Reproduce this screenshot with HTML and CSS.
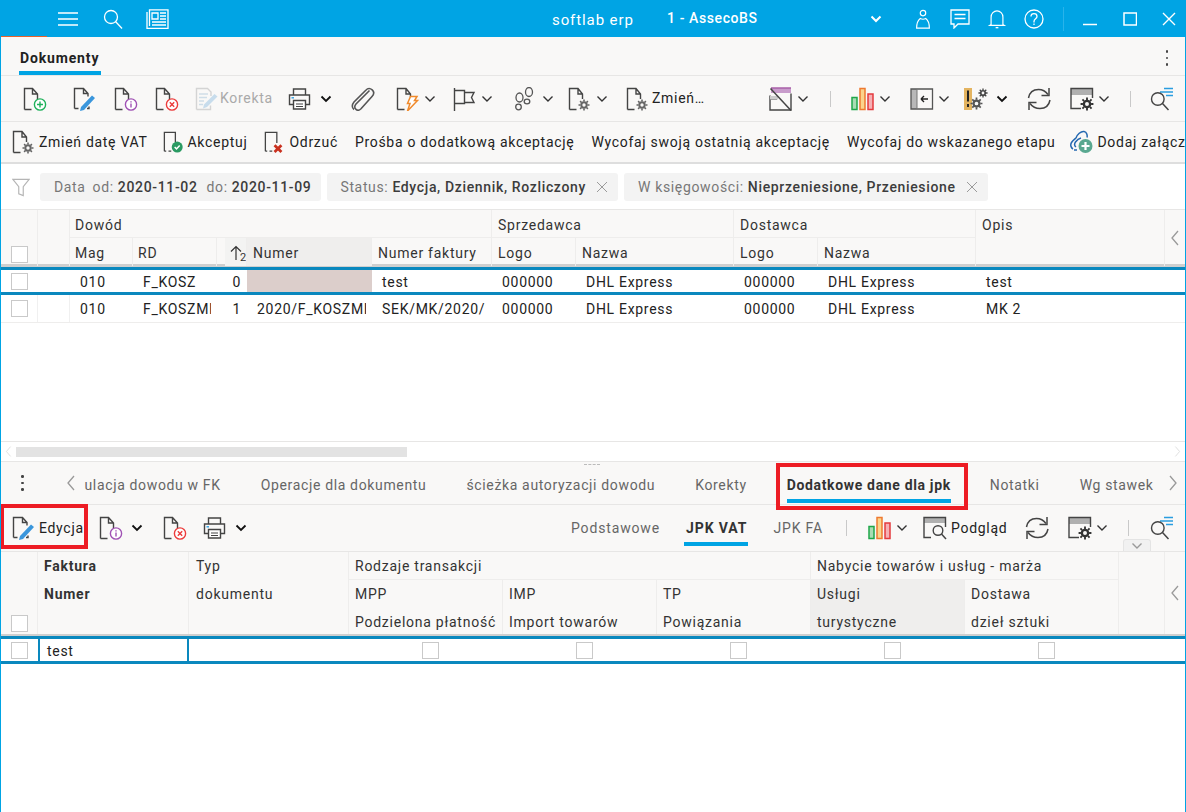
FILE: index.html
```html
<!DOCTYPE html>
<html lang="pl">
<head>
<meta charset="utf-8">
<title>softlab erp</title>
<link rel="stylesheet" href="styles.css">
</head>
<body>
<svg class="defs" xmlns="http://www.w3.org/2000/svg">
  <symbol id="doc" viewBox="0 0 24 24"><path d="M1.5 22.5V1.5h8l5 5.5v6M9.5 1.5V7h5M1.5 22.5h7" fill="none" stroke="#444" stroke-width="1.4"/></symbol>
  <symbol id="i-add" viewBox="0 0 24 24"><use href="#doc"/><circle cx="17" cy="17.5" r="5.6" fill="#fff" stroke="#1eb15a" stroke-width="1.4"/><path d="M17 14.5v6M14 17.5h6" stroke="#1eb15a" stroke-width="1.4"/></symbol>
  <symbol id="i-edit" viewBox="0 0 24 24"><path d="M1.5 21.5V1.5h9l4.500 5v3M10.500 1.500V6.500h4.500M1.500 21.500h4M14 21.500h2v-2" fill="none" stroke="#444" stroke-width="1.400"/><path d="M19 8.500l3 2.500L11 23l-4 1 1-4z" fill="#3a96dc"/></symbol>
  <symbol id="i-info" viewBox="0 0 24 24"><use href="#doc"/><circle cx="17" cy="17.500" r="5.600" fill="#fff" stroke="#a052b4" stroke-width="1.400"/><path d="M17 16.500v4M17 14.200v1.300" stroke="#a052b4" stroke-width="1.400"/></symbol>
  <symbol id="i-del" viewBox="0 0 24 24"><use href="#doc"/><circle cx="17" cy="17.500" r="5.600" fill="#fff" stroke="#ec3b3b" stroke-width="1.400"/><path d="M14.800 15.300l4.400 4.400M19.200 15.300l-4.400 4.400" stroke="#ec3b3b" stroke-width="1.400"/></symbol>
  <symbol id="i-korekta" viewBox="0 0 24 24"><path d="M1.500 22.500V1.500h11l3.500 3.500v4M1.500 22.500h14v-4" fill="none" stroke="#d4d4d4" stroke-width="1.400"/><path d="M4 7h9M4 10.500h8M4 14h5M4 17.500h4" stroke="#cfdde8" stroke-width="1.300"/><path d="M19.500 7l3 2.500L12 20l-4 1.500 1-4z" fill="#c7dcec"/></symbol>
  <symbol id="i-print" viewBox="0 0 24 24"><path d="M5.500 8V2h12v6" fill="none" stroke="#444" stroke-width="1.400"/><path d="M5 17.500H1.500V8h20v9.500H18" fill="none" stroke="#444" stroke-width="1.400"/><path d="M5.500 13.500h12V22h-12z" fill="#fff" stroke="#444" stroke-width="1.400"/><path d="M8 17h7M8 19.500h7" stroke="#444"/><path d="M3.500 10.800h2.500" stroke="#2a9de0" stroke-width="1.400"/></symbol>
  <symbol id="i-clip" viewBox="0 0 24 24"><path d="M18.500 3.500L5 17c-1.800 2-1.500 4 0 5.300 1.600 1.400 3.500 1 5-.5L21 9.500c2.300-2.500 2-5 .2-6.700C19 1 16.600 1.300 14.800 3.200L3 15c-2.500 3-2 6 0 7.500" fill="none" stroke="#555" stroke-width="1.600"/></symbol>
  <symbol id="i-flash" viewBox="0 0 24 24"><path d="M1.500 22.500V1.500h8.500l4.500 5.500v3M10 1.500V7h4.500M1.500 22.500h7" fill="none" stroke="#444" stroke-width="1.400"/><path d="M14.500 9.500H21l-2.500 4h3L11.500 24l2.500-7.500h-2.500z" fill="#fff" stroke="#f08a2c" stroke-width="1.500"/></symbol>
  <symbol id="i-flag" viewBox="0 0 24 24"><path d="M1.500 1v23M1.500 3.500h10v13h-10M11.500 5.500H21l-2.500 5 2.500 5h-9.500" fill="none" stroke="#444" stroke-width="1.400"/></symbol>
  <symbol id="i-steps" viewBox="0 0 24 24" fill="none" stroke="#555" stroke-width="1.300"><ellipse cx="5.500" cy="10.500" rx="3.500" ry="4.500"/><ellipse cx="4.500" cy="20" rx="2.800" ry="2.800"/><ellipse cx="15" cy="5" rx="3.500" ry="4.500"/><ellipse cx="13" cy="14.500" rx="2.800" ry="2.300"/></symbol>
  <symbol id="gear" viewBox="0 0 12 12"><circle cx="6" cy="6" r="2.700" fill="none" stroke="currentColor" stroke-width="2"/><path d="M6 .5v2M6 9.500v2M.5 6h2M9.500 6h2M2.100 2.100l1.400 1.400M8.500 8.500l1.400 1.400M2.100 9.900l1.400-1.400M8.500 3.500l1.400-1.400" stroke="currentColor" stroke-width="1.600"/></symbol>
  <symbol id="i-docgear" viewBox="0 0 24 24"><path d="M1.500 22.500V1.500h8.500l4.500 5.500v5M10 1.500V7h4.500M1.500 22.500h7" fill="none" stroke="#444" stroke-width="1.400"/><use href="#gear" x="10" y="12" width="12" height="12" color="#666"/></symbol>
  <symbol id="i-accept" viewBox="0 0 24 24"><path d="M1.500 22V1.500h12V12M1.500 22h2M6 22h3" fill="none" stroke="#444" stroke-width="1.400"/><circle cx="15.500" cy="17.500" r="6" fill="#2a9a62"/><path d="M12.700 17.500l2 2 3.500-3.800" fill="none" stroke="#fff" stroke-width="1.600"/></symbol>
  <symbol id="i-reject" viewBox="0 0 24 24"><path d="M1.500 22V1.500h12.500V13M1.500 22h2M6 22h3" fill="none" stroke="#444" stroke-width="1.400"/><path d="M11.500 15.500l7.500 7.500M19 15.500L11.500 23" stroke="#c9311f" stroke-width="3"/></symbol>
  <symbol id="i-cloud" viewBox="0 0 24 24"><path d="M6 8C7 4.500 11 1 14 1.500s3.500 4 3 6M3 19c-2-1-3-4-1.500-6.500S5 9 6 8M6 17c-1.500-1-2-3-.5-5S9 8.500 11 8" fill="none" stroke="#2468b0" stroke-width="1.500"/><path d="M4 20h3" stroke="#2468b0" stroke-width="1.500"/><circle cx="15.500" cy="16" r="7" fill="#5aa890"/><path d="M15.500 12v8M11.500 16h8" stroke="#fff" stroke-width="2.200"/></symbol>
  <symbol id="i-nobox" viewBox="0 0 24 24"><path d="M2 1h20v5H2z" fill="#c89ccb"/><path d="M2 1h20" stroke="#a860a8" stroke-width="1.500"/><path d="M1 8.500v14.500h21V6.500" fill="none" stroke="#444" stroke-width="1.400"/><path d="M1 12h7" stroke="#444" stroke-width="1.400"/><path d="M1 9h8v3.500H1z" fill="#ccc"/><path d="M1.500 1.500L22 23.500" stroke="#444" stroke-width="1.500"/></symbol>
  <symbol id="i-chart" viewBox="0 0 24 24"><path d="M1 10.500h5v12H1z" fill="#a9dcb4" stroke="#1fa64a" stroke-width="1.500"/><path d="M9 1.500h5v21H9z" fill="#fbd48c" stroke="#ee7a30" stroke-width="1.500"/><path d="M17 7h5v15.500h-5z" fill="#f5b0b4" stroke="#e43a3e" stroke-width="1.500"/></symbol>
  <symbol id="i-panel" viewBox="0 0 24 24"><path d="M1 2h6v20H1z" fill="#b8b8b8"/><path d="M1 2h21.500v20H1z" fill="none" stroke="#555" stroke-width="1.300"/><path d="M7 2v20" stroke="#777"/><path d="M11 12h7M11 12l3-3M11 12l3 3" stroke="#222" stroke-width="1.400" fill="none"/></symbol>
  <symbol id="i-warn" viewBox="0 0 24 24"><path d="M0 1h8v22H0z" fill="#e4b460"/><path d="M4 3.500v11M4 17v3" stroke="#222" stroke-width="2"/><use href="#gear" x="14" y="1" width="10" height="10" color="#444"/><use href="#gear" x="6" y="10" width="13" height="13" color="#555"/></symbol>
  <symbol id="i-refresh" viewBox="0 0 24 24"><path d="M1.500 11C2.500 5.500 6.500 2.500 11.500 2.500c4 0 7 1.500 9.500 5M23 13c-1 5.500-5 8.500-10 8.500-4 0-7.500-1.500-10-5" fill="none" stroke="#444" stroke-width="1.500"/><path d="M22 1v7.500h-7.500M2 23v-7.500h7.500" fill="none" stroke="#444" stroke-width="1.500"/></symbol>
  <symbol id="i-set" viewBox="0 0 24 24"><path d="M1 8V1.500h21V8z" fill="#b0b0b0"/><path d="M11 21.500H1V1.500h21.500V11" fill="none" stroke="#444" stroke-width="1.400"/><use href="#gear" x="10" y="10" width="14" height="14" color="#333"/></symbol>
  <symbol id="i-search" viewBox="0 0 24 24"><path d="M10 5h13M14 1.500h9M16 8.500h7" stroke="#2a9de0" stroke-width="1.300"/><circle cx="7.800" cy="12" r="6.300" fill="none" stroke="#444" stroke-width="1.400"/><path d="M12.500 16.500l6 6.500" stroke="#444" stroke-width="1.500"/></symbol>
  <symbol id="i-preview" viewBox="0 0 24 24"><path d="M1 7V1.500h21V7z" fill="#b0b0b0"/><path d="M8 21.500H1V1.500h21.500V11" fill="none" stroke="#444" stroke-width="1.400"/><circle cx="15" cy="14.500" r="4.800" fill="none" stroke="#444" stroke-width="1.400"/><path d="M18.500 18l4.500 5" stroke="#444" stroke-width="1.500"/></symbol>
  <symbol id="chev" viewBox="0 0 12 8"><path d="M1.500 1.500L6 6l4.500-4.500" fill="none" stroke="#333" stroke-width="1.400"/></symbol>
  <symbol id="chevb" viewBox="0 0 12 8"><path d="M1.500 1.500L6 6l4.500-4.500" fill="none" stroke="#111" stroke-width="1.800"/></symbol>
  <symbol id="left" viewBox="0 0 10 18"><path d="M8 2L2 9l6 7" fill="none" stroke="currentColor" stroke-width="1.300"/></symbol>
  <symbol id="right" viewBox="0 0 10 18"><path d="M2 2l6 7-6 7" fill="none" stroke="currentColor" stroke-width="1.300"/></symbol>
  <symbol id="x" viewBox="0 0 12 12"><path d="M1 1l10 10M11 1L1 11" stroke="#9a9a9a" stroke-width="1"/></symbol>
  <symbol id="sortup" viewBox="0 0 12 16"><path d="M6 15V1.500M1 6.500l5-5 5 5" fill="none" stroke="#333" stroke-width="1.200"/></symbol>
</svg>

<div class="app">
  <header class="top">
    <div class="top-accent"></div>
    <div class="top-left">
      <svg class="tw20" viewBox="0 0 20 14"><path d="M0 1h20M0 7h20M0 13h20" stroke="#fff" stroke-width="1.400"/></svg>
      <svg class="tw20" viewBox="0 0 20 20"><circle cx="8" cy="8" r="6.500" fill="none" stroke="#fff" stroke-width="1.300"/><path d="M12.500 12.500l6.500 7" stroke="#fff" stroke-width="1.300"/></svg>
      <svg class="tw23" viewBox="0 0 23 20"><path d="M1 3V19.500H22V.8H3.500V17" fill="none" stroke="#fff" stroke-width="1.300"/><path d="M6 4h6v6H6z" fill="none" stroke="#fff" stroke-width="1.300"/><path d="M14 4h6M14 7h6M14 10h6M6 13h14M6 16h14" stroke="#fff" stroke-width="1.300"/></svg>
    </div>
    <div class="brand">softlab erp</div>
    <div class="company">1 - AssecoBS</div>
    <svg class="top-chev" viewBox="0 0 12 8"><path d="M1.500 1.500L6 6l4.500-4.500" fill="none" stroke="#fff" stroke-width="2"/></svg>
    <div class="top-right">
      <svg class="tw20" viewBox="0 0 20 22"><circle cx="10" cy="4.500" r="3" fill="none" stroke="#fff" stroke-width="1.300"/><path d="M3 21c0-6 2-9 4-10.500 2 1 4 1 6 0 2 1.500 4 4.500 4 10.500z" fill="none" stroke="#fff" stroke-width="1.300"/></svg>
      <svg class="tw20" viewBox="0 0 20 20"><path d="M1 1h18v14H8l-4 4v-4H1z" fill="none" stroke="#fff" stroke-width="1.300"/><path d="M4.500 5.500h11M4.500 9.500h11" stroke="#fff" stroke-width="1.300"/></svg>
      <svg class="tw20" viewBox="0 0 20 22"><path d="M3.500 17V9c0-4 3-7 6.500-7s6.500 3 6.500 7v8l1.500 1H2z" fill="none" stroke="#fff" stroke-width="1.300"/><path d="M8.500 20.500h3" stroke="#fff" stroke-width="1.500"/></svg>
      <svg class="tw20" viewBox="0 0 20 20"><circle cx="10" cy="10" r="9" fill="none" stroke="#fff" stroke-width="1.300"/><path d="M7 7.500C7 5.500 8.500 4.700 10 4.700s3 1 3 2.700c0 2.300-3 2.300-3 5v1M10 14.500v1.500" fill="none" stroke="#fff" stroke-width="1.300"/></svg>
      <div class="top-sep"></div>
      <svg class="win" viewBox="0 0 14 14"><path d="M0 12.500h14" stroke="#fff" stroke-width="1.500"/></svg>
      <svg class="win" viewBox="0 0 14 14"><path d="M1 1h12.500v12H1z" fill="none" stroke="#fff" stroke-width="1.500"/></svg>
      <svg class="win" viewBox="0 0 14 14"><path d="M1 1l12 12M13 1L1 13" stroke="#fff" stroke-width="1.400"/></svg>
    </div>
  </header>

  <div class="doc-tabs">
    <div class="doc-tab">Dokumenty</div>
    <div class="kebab"><i></i><i></i><i></i></div>
  </div>

  <div class="tb tb-main">
    <div class="btn"><svg class="ic"><use href="#i-add"/></svg></div>
    <div class="btn"><svg class="ic"><use href="#i-edit"/></svg></div>
    <div class="btn"><svg class="ic"><use href="#i-info"/></svg></div>
    <div class="btn"><svg class="ic"><use href="#i-del"/></svg></div>
    <div class="btn off"><svg class="ic"><use href="#i-korekta"/></svg>Korekta</div>
    <div class="btn wide"><svg class="ic"><use href="#i-print"/></svg><svg class="ch"><use href="#chevb"/></svg></div>
    <div class="btn"><svg class="ic"><use href="#i-clip"/></svg></div>
    <div class="btn"><svg class="ic"><use href="#i-flash"/></svg><svg class="ch"><use href="#chev"/></svg></div>
    <div class="btn"><svg class="ic"><use href="#i-flag"/></svg><svg class="ch"><use href="#chev"/></svg></div>
    <div class="btn"><svg class="ic"><use href="#i-steps"/></svg><svg class="ch"><use href="#chev"/></svg></div>
    <div class="btn"><svg class="ic"><use href="#i-docgear"/></svg><svg class="ch"><use href="#chev"/></svg></div>
    <div class="btn label"><svg class="ic"><use href="#i-docgear"/></svg>Zmień…</div>
    <div class="btn"><svg class="ic"><use href="#i-nobox"/></svg><svg class="ch"><use href="#chev"/></svg></div>
    <div class="sep"></div>
    <div class="btn"><svg class="ic"><use href="#i-chart"/></svg><svg class="ch"><use href="#chev"/></svg></div>
    <div class="btn"><svg class="ic"><use href="#i-panel"/></svg><svg class="ch"><use href="#chev"/></svg></div>
    <div class="btn wide"><svg class="ic"><use href="#i-warn"/></svg><svg class="ch"><use href="#chevb"/></svg></div>
    <div class="btn"><svg class="ic"><use href="#i-refresh"/></svg></div>
    <div class="btn"><svg class="ic"><use href="#i-set"/></svg><svg class="ch"><use href="#chev"/></svg></div>
    <div class="sep"></div>
    <div class="btn"><svg class="ic"><use href="#i-search"/></svg></div>
  </div>

  <div class="tb tb-actions">
    <div class="act"><svg class="ic"><use href="#i-docgear"/></svg>Zmień datę VAT</div>
    <div class="act"><svg class="ic ic-narrow"><use href="#i-accept"/></svg>Akceptuj</div>
    <div class="act"><svg class="ic ic-narrow"><use href="#i-reject"/></svg>Odrzuć</div>
    <div class="act">Prośba o dodatkową akceptację</div>
    <div class="act">Wycofaj swoją ostatnią akceptację</div>
    <div class="act">Wycofaj do wskazanego etapu</div>
    <div class="act act-last"><svg class="ic"><use href="#i-cloud"/></svg>Dodaj załącz</div>
  </div>

  <div class="filters">
    <svg class="funnel" viewBox="0 0 20 20"><path d="M1 1h18l-6.500 8v10l-5-2V9z" fill="none" stroke="#b5b5b5" stroke-width="1.300"/></svg>
    <div class="chip chip-date"><span class="lbl">Data</span><span class="lbl mlsm">od:</span><b>2020-11-02</b><span class="lbl mlmd">do:</span><b>2020-11-09</b></div>
    <div class="chip chip-status"><span class="lbl">Status:</span><b>Edycja, Dziennik, Rozliczony</b><svg class="x"><use href="#x"/></svg></div>
    <div class="chip"><span class="lbl">W księgowości:</span><b>Nieprzeniesione, Przeniesione</b><svg class="x"><use href="#x"/></svg></div>
  </div>

  <section class="grid-pane upper">
    <div class="head t1 t1-head">
      <div class="hc r2 box-c"><span class="cb"></span></div>
      <div class="hc r2"></div>
      <div class="hc s6 line p5">Dowód</div>
      <div class="hc s2 line">Sprzedawca</div>
      <div class="hc s2 line">Dostawca</div>
      <div class="hc r2">Opis</div>
      <div class="hc r2 arrow"><svg class="arr"><use href="#left"/></svg></div>
      <div class="hc p5">Mag</div>
      <div class="hc p5">RD</div>
      <div class="hc"></div>
      <div class="hc sort"><svg class="sort-ic"><use href="#sortup"/></svg><span>2</span></div>
      <div class="hc shade">Numer</div>
      <div class="hc">Numer faktury</div>
      <div class="hc">Logo</div>
      <div class="hc">Nazwa</div>
      <div class="hc">Logo</div>
      <div class="hc">Nazwa</div>
    </div>
    <div class="row t1 sel">
      <div class="c box-c"><span class="cb"></span></div><div class="c"></div>
      <div class="c">010</div><div class="c">F_KOSZ</div><div class="c s2 num">0</div>
      <div class="c pink"></div><div class="c">test</div><div class="c">000000</div><div class="c">DHL Express</div>
      <div class="c">000000</div><div class="c">DHL Express</div><div class="c">test</div>
    </div>
    <div class="row t1 plain">
      <div class="c box-c ruled"><span class="cb"></span></div><div class="c ruled"></div>
      <div class="c">010</div><div class="c"><span class="clip">F_KOSZMI</span></div><div class="c s2 num">1</div>
      <div class="c"><span class="clip">2020/F_KOSZMI</span></div><div class="c"><span class="clip">SEK/MK/2020/1</span></div><div class="c">000000</div><div class="c">DHL Express</div>
      <div class="c">000000</div><div class="c">DHL Express</div><div class="c">MK 2</div>
    </div>
  </section>

  <div class="hscroll">
    <svg class="sc-arr"><use href="#left"/></svg>
    <div class="track"><div class="thumb"></div></div>
    <svg class="sc-arr"><use href="#right"/></svg>
  </div>

  <nav class="sub-tabs">
    <div class="kebab small"><i></i><i></i><i></i></div>
    <svg class="tab-arr"><use href="#left"/></svg>
    <div class="tabs-list">
      <span>ulacja dowodu w FK</span>
      <span>Operacje dla dokumentu</span>
      <span>ścieżka autoryzacji dowodu</span>
      <span>Korekty</span>
      <span class="on">Dodatkowe dane dla jpk</span>
      <span>Notatki</span>
      <span>Wg stawek</span>
    </div>
    <svg class="tab-arr"><use href="#right"/></svg>
    <div class="grip"></div>
  </nav>

  <div class="tb tb-lower">
    <div class="act"><svg class="ic"><use href="#i-edit"/></svg>Edycja</div>
    <div class="btn"><svg class="ic"><use href="#i-info"/></svg><svg class="ch chx"><use href="#chevb"/></svg></div>
    <div class="btn"><svg class="ic"><use href="#i-del"/></svg></div>
    <div class="btn"><svg class="ic"><use href="#i-print"/></svg><svg class="ch chx"><use href="#chevb"/></svg></div>
    <div class="views">
      <span>Podstawowe</span><span class="on">JPK VAT</span><span>JPK FA</span>
    </div>
    <div class="sep"></div>
    <div class="btn"><svg class="ic"><use href="#i-chart"/></svg><svg class="ch"><use href="#chev"/></svg></div>
    <div class="act"><svg class="ic"><use href="#i-preview"/></svg>Podgląd</div>
    <div class="btn"><svg class="ic"><use href="#i-refresh"/></svg></div>
    <div class="btn"><svg class="ic"><use href="#i-set"/></svg><svg class="ch"><use href="#chev"/></svg></div>
    <div class="sep"></div>
    <div class="btn"><svg class="ic"><use href="#i-search"/></svg></div>
    <div class="collapse"><svg class="ch"><use href="#chev"/></svg></div>
  </div>

  <section class="grid-pane lower">
    <div class="head t2 t2-head">
      <div class="hc r3 box-end"><span class="cb"></span></div>
      <div class="hc strong">Faktura</div>
      <div class="hc p7">Typ</div>
      <div class="hc s3 line">Rodzaje transakcji</div>
      <div class="hc s2 line">Nabycie towarów i usług - marża</div>
      <div class="hc r3"></div>
      <div class="hc r3 arrow"><svg class="arr"><use href="#left"/></svg></div>
      <div class="hc strong r2">Numer</div>
      <div class="hc r2 p7">dokumentu</div>
      <div class="hc">MPP</div><div class="hc">IMP</div><div class="hc">TP</div>
      <div class="hc shade">Usługi</div><div class="hc">Dostawa</div>
      <div class="hc">Podzielona płatność</div><div class="hc">Import towarów</div><div class="hc">Powiązania</div>
      <div class="hc shade">turystyczne</div><div class="hc">dzieł sztuki</div>
    </div>
    <div class="row t2 sel">
      <div class="c box-c"><span class="cb"></span></div>
      <div class="c focus">test</div>
      <div class="c"></div>
      <div class="c mid"><span class="cb"></span></div>
      <div class="c mid"><span class="cb"></span></div>
      <div class="c mid"><span class="cb"></span></div>
      <div class="c mid"><span class="cb"></span></div>
      <div class="c mid"><span class="cb"></span></div>
    </div>
  </section>

  <div class="mark mark-edit"></div>
  <div class="mark mark-tab"></div>
</div>
</body>
</html>
```

FILE: styles.css
```css
* { box-sizing: border-box; }
html, body { margin: 0; height: 100%; }
body { font: 14px/1.2 Roboto, "Liberation Sans", sans-serif; color: #222; background: #fff; overflow: hidden; }
.defs { display: none; }

.app { position: relative; width: 1186px; height: 812px; display: flex; flex-direction: column; border-left: 1px solid #00a4e4; border-right: 1px solid #00a4e4; overflow: hidden; }

/* title bar */
.top { position: relative; flex: 0 0 37px; margin: 0 -1px; display: flex; align-items: center; background: #00a4e4; color: #fff; }
.top-accent { position: absolute; left: 1px; bottom: 0; width: 46px; height: 1px; background: #e8622c; }
.top-left { display: flex; align-items: center; gap: 25px; margin-left: 58px; width: 494px; }
.tw20 { width: 20px; height: 20px; flex: none; }
.tw23 { width: 23px; height: 20px; flex: none; margin-left: -2px; }
.brand { width: 115px; font-size: 15px; letter-spacing: .9px; padding-top: 3px; }
.company { width: 203px; font-size: 14px; letter-spacing: .6px; font-weight: 500; }
.top-chev { width: 12px; height: 8px; }
.top-right { display: flex; align-items: center; gap: 17px; margin-left: 31px; }
.top-sep { width: 1px; height: 24px; background: #29b3ea; margin-left: 2px; }
.win { width: 14px; height: 14px; margin-left: 2px; }
.win + .win { margin-left: 9px; }
.win:last-child { margin-left: 8px; }

/* document tab row */
.doc-tabs { flex: 0 0 39px; display: flex; justify-content: space-between; background: #f9f8f7; border-bottom: 1px solid #e7e6e5; }
.doc-tab { margin-left: 18px; padding: 13px 1px 0; width: 82px; height: 38px; border-bottom: 4px solid #00a4e4; font-weight: 700; letter-spacing: .85px; white-space: nowrap; }
.kebab { display: flex; flex-direction: column; gap: 4px; margin: 13px 17px 0 0; }
.kebab i { width: 2.500px; height: 2.500px; border-radius: 50%; background: #444; }
.kebab.small { margin: 0 0 0 20px; }

/* toolbars */
.tb { display: flex; align-items: center; background: #f9f8f7; letter-spacing: .7px; white-space: nowrap; }
.ic { width: 24px; height: 24px; flex: none; }
.ic-narrow { width: 22px; }
.ch { width: 12px; height: 8px; flex: none; margin-left: 4px; }
.chx { margin-left: 8px; }
.btn { display: flex; align-items: center; gap: 0; }
.btn.off { color: #aaa; gap: 1px; }
.btn.label { gap: 2px; }
.btn.wide .ch { margin-left: 8px; }
.sep { width: 1px; height: 16px; background: #c9c9c9; flex: none; }

.tb-main { flex: 0 0 46px; border-bottom: 1px solid #e7e6e5; display: grid; align-items: center; padding-left: 22px;
  grid-template-columns: 50px 41px 41px 40px 93px 63px 45px 57px 61px 54px 58px 143px 61px 21px 59px 54px 63px 43px 60px 20px 30px; }

.tb-actions { flex: 0 0 42px; gap: 17px; padding-left: 11px; border-bottom: 2px solid #dedede; overflow: hidden; }
.act { display: flex; align-items: center; gap: 3px; }
.tb-actions .act:first-child { margin-right: -2px; }
.tb-actions .act-last { margin-left: -2px; }

/* filter chips */
.filters { flex: 0 0 46px; display: flex; align-items: center; gap: 6px; padding: 1px 0 0 11px; background: #fff; border-bottom: 1px solid #e7e6e5; letter-spacing: .65px; }
.funnel { width: 18px; height: 19px; margin-right: 4px; }
.chip { display: flex; align-items: center; height: 28px; padding: 0 14px; gap: 4px; background: #f3f3f3; border-radius: 3px; white-space: pre; color: #444; }
.chip-date { padding-right: 10px; }
.chip-status { padding-left: 13px; }
.chip .lbl { color: #777; }
.chip b { font-weight: 500; color: #3c3c3c; }
.mlsm { margin-left: 3px; }
.mlmd { margin-left: 5px; }
.x { width: 12px; height: 12px; margin-left: 6px; margin-right: -4px; }

/* grids */
.t1 { display: grid; grid-template-columns: 37px 32px 63px 84px 8px 22px 125px 120px 84px 158px 84px 158px 189px 20px; }
.t2 { display: grid; grid-template-columns: 37px 151px 160px 154px 154px 154px 154px 154px 46px 20px; }
.upper { flex: 0 0 231px; background: #fff; }
.lower { flex: 1; background: #fff; }
.head { background: #f9f8f7; letter-spacing: .75px; color: #333; }
.t1-head { grid-template-rows: 28px 28px; border-bottom: 3px solid #cfcfcf; height: 57px; }
.t2-head { grid-template-rows: 28px 28px 26px; height: 84px; border-bottom: 2px solid #cfcfcf; }
.hc { padding: 6px 5px 0 6px; border-right: 1px solid #eeedec; overflow: hidden; white-space: nowrap; font-size: 14px; }
.t1-head .hc { padding-top: 7px; }
.t1-head .p5 { padding-left: 5px; }
.t2-head .p7 { padding-left: 7px; }
.line { border-bottom: 1px solid #eeedec; }
.r2 { grid-row: span 2; }
.r3 { grid-row: span 3; }
.s2 { grid-column: span 2; }
.s3 { grid-column: span 3; }
.s6 { grid-column: span 6; }
.t1-head .box-c { display: flex; align-items: flex-end; justify-content: center; padding: 0 0 3px; }
.t2-head .box-end { display: flex; align-items: flex-end; justify-content: center; padding: 0 0 2px; }
.shade { background: #efeeed; }
.t1-head .sort { position: relative; padding: 0; background: #f3f3f2; }
.sort-ic { position: absolute; left: 5px; top: 7px; width: 12px; height: 16px; }
.sort span { position: absolute; left: 15px; top: 13px; font-size: 11px; letter-spacing: 0; }
.strong { font-weight: 700; }
.t1-head .arrow, .t2-head .arrow { color: #9a9a9a; display: flex; align-items: center; justify-content: center; border-right: 0; padding: 0; }
.arr { width: 10px; height: 18px; }
.cb { display: block; width: 17px; height: 17px; background: #fff; border: 1px solid #c9c9c9; }

.row { background: #fff; letter-spacing: .7px; }
.row.sel { height: 28px; border-top: 3px solid #0a88be; border-bottom: 3px solid #0a88be; }
.row.plain { height: 28px; border-bottom: 1px solid #eeedec; }
.c { display: flex; align-items: center; min-width: 0; padding: 2px 6px 0 10px; overflow: hidden; white-space: nowrap; }
.row .ruled { border-right: 1px solid #f0f0f0; }
.clip { display: block; min-width: 0; overflow: hidden; }
.row .box-c { padding: 0; align-items: center; justify-content: center; }
.num { justify-content: flex-end; padding-right: 6px; }
.pink { background: #dccecb; }
.row.sel .focus { border-left: 2px solid #0a88be; border-right: 2px solid #0a88be; padding-left: 7px; }
.row .mid { justify-content: center; padding: 0 0 0 8px; }

/* horizontal scrollbar */
.hscroll { flex: 0 0 21px; display: flex; align-items: center; gap: 4px; padding: 0 4px; background: #fff; border-top: 1px solid #e7e6e5; border-bottom: 1px solid #e7e6e5; color: #ddd; }
.sc-arr { width: 7px; height: 13px; flex: none; }
.track { flex: 1; height: 10px; }
.thumb { width: 391px; height: 100%; background: #e3e3e3; }

/* lower tabs */
.sub-tabs { position: relative; flex: 0 0 43px; display: flex; align-items: center; background: #f9f8f7; border-bottom: 1px solid #e7e6e5; color: #999; letter-spacing: .65px; }
.tab-arr { width: 10px; height: 18px; flex: none; }
.sub-tabs .tab-arr:first-of-type { margin-left: 42px; }
.tabs-list { display: flex; gap: 40px; margin: 0 14px 0 9px; height: 100%; align-items: center; color: #666; white-space: nowrap; }
.tabs-list span { padding-top: 4px; }
.tabs-list .on { font-weight: 700; color: #333; letter-spacing: .66px; align-self: flex-end; height: 38px; padding-top: 12px; border-bottom: 4px solid #00a4e4; margin: 0 -1px 1px 0; }
.grip { position: absolute; left: 583px; top: 2px; width: 16px; border-top: 1px dashed #bbb; }

/* lower toolbar */
.tb-lower { position: relative; flex: 0 0 47px; border-bottom: 1px solid #e7e6e5; padding-left: 11px; }
.tb-lower .act { width: 87px; }
.tb-lower .btn:nth-child(2) { width: 64px; }
.tb-lower .btn:nth-child(3) { width: 40px; }
.tb-lower .btn:nth-child(4) { width: 368px; }
.views { display: flex; align-self: stretch; align-items: flex-start; width: 275px; gap: 24px; color: #666; letter-spacing: .85px; }
.views span { padding-top: 15px; }
.views .on { font-weight: 700; color: #333; height: 41px; padding: 15px 1px 0 2px; margin-right: 1px; letter-spacing: .9px; border-bottom: 4px solid #00a4e4; }
.tb-lower .sep { margin-right: 21px; }
.tb-lower .btn:nth-child(7) { width: 55px; }
.tb-lower .act:nth-child(8) { width: 102px; gap: 4px; }
.tb-lower .btn:nth-child(9) { width: 43px; }
.tb-lower .btn:nth-child(10) { width: 60px; }
.collapse { position: absolute; left: 1122px; bottom: 0; width: 28px; height: 12px; background: #f1f1f1; border: 1px solid #e4e4e4; border-bottom: 0; border-radius: 3px 3px 0 0; display: flex; justify-content: center; align-items: center; }
.collapse .ch { margin: 0; opacity: .45; }

/* red annotations laid over the screenshot */
.mark { position: absolute; border: 4px solid #ed1c24; pointer-events: none; }
.mark-edit { left: -1px; top: 504px; width: 88px; height: 45px; }
.mark-tab { left: 775px; top: 463px; width: 192px; height: 47px; }
```
